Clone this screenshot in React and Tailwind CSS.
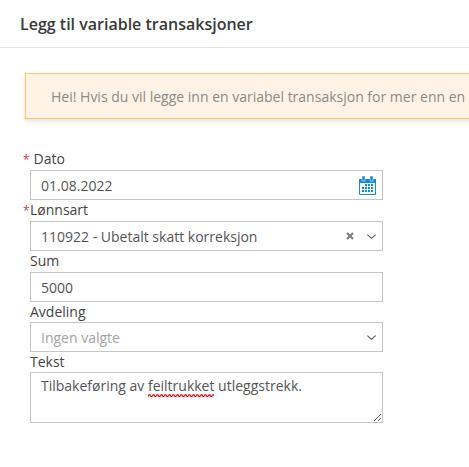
import React from 'react';

const CalendarIcon = () => (
  <svg width="17" height="19" viewBox="0 0 17 19" className="block">
    <path d="M0.5 3.5h16v15h-16z" fill="#fff" stroke="#0f8ad8" />
    <rect x="0" y="3" width="17" height="4" fill="#0f8ad8" />
    <rect x="3" y="0" width="3" height="5" fill="#0f8ad8" stroke="#fff" strokeWidth="0.5" />
    <rect x="11" y="0" width="3" height="5" fill="#0f8ad8" stroke="#fff" strokeWidth="0.5" />
    <g fill="#0f8ad8">
      <rect x="6" y="8" width="2" height="2" />
      <rect x="9" y="8" width="2" height="2" />
      <rect x="12" y="8" width="2" height="2" />
      <rect x="3" y="11" width="2" height="2" />
      <rect x="6" y="11" width="2" height="2" />
      <rect x="9" y="11" width="2" height="2" />
      <rect x="12" y="11" width="2" height="2" />
      <rect x="3" y="14" width="2" height="2" />
      <rect x="6" y="14" width="2" height="2" />
      <rect x="9" y="14" width="2" height="2" />
      <rect x="12" y="14" width="2" height="2" />
    </g>
  </svg>
);

const Chevron = () => (
  <svg width="9" height="5" viewBox="0 0 9 5" className="block">
    <path d="M0.4 0.6 4.5 4.3 8.6 0.6" fill="none" stroke="#555" strokeWidth="1.1" />
  </svg>
);

const Clear = () => (
  <svg width="8" height="8" viewBox="0 0 8 8" className="block">
    <path d="M1 1 7 7M7 1 1 7" fill="none" stroke="#808080" strokeWidth="2.2" />
  </svg>
);

const Field = ({ children }) => (
  <div className="h-[30px] w-[353px] border border-[#c6c6c6] bg-white flex items-center pl-[10px] pr-[6px] text-[14px] text-[#555]">
    {children}
  </div>
);

const Label = ({ className, children }) => (
  <div className={`text-[14px] leading-[20px] text-[#444] ${className}`}>{children}</div>
);

export default function App() {
  return (
    <div className="w-[469px] h-[467px] overflow-hidden bg-white font-['Open_Sans',sans-serif]">
      <div className="h-[48px] border-b border-[#e2e2e2] pl-[20px] flex items-center">
        <h1 className="text-[16px] font-semibold text-[#3a3a3a]">Legg til variable transaksjoner</h1>
      </div>

      <div className="ml-[25px] mt-[25px] w-[600px] h-[46px] border border-[#fbc56e] bg-[#fff3e6] shadow-[0_2px_5px_rgba(0,0,0,0.12)] pl-[25px] flex items-center text-[14px] text-[#8a8a8a] whitespace-nowrap">
        Hei! Hvis du vil legge inn en variabel transaksjon for mer enn en
      </div>

      <div className="mt-[30px] ml-[30px] relative">
        <span className="absolute left-[-7px] top-[1px] text-[12px] leading-[20px] text-[#d9363e]">*</span>
        <Label className="h-[21px]"><span className="ml-[3.5px]">Dato</span></Label>
        <Field>
          <span className="flex-1">01.08.2022</span>
          <CalendarIcon />
        </Field>

        <div className="relative">
          <span className="absolute left-[-7px] top-[1px] text-[12px] leading-[20px] text-[#d9363e]">*</span>
          <Label className="h-[21px]">Lønnsart</Label>
        </div>
        <Field>
          <span className="flex-1">110922 - Ubetalt skatt korreksjon</span>
          <span className="mr-[13px]"><Clear /></span>
          <Chevron />
        </Field>

        <Label className="h-[21px]">Sum</Label>
        <Field>5000</Field>

        <Label className="h-[20px]">Avdeling</Label>
        <Field>
          <span className="flex-1 text-[#a3a3a3]">Ingen valgte</span>
          <Chevron />
        </Field>

        <Label className="h-[20px]">Tekst</Label>
        <div className="h-[51px] w-[353px] border border-[#c6c6c6] bg-white px-[10px] pt-[3px] text-[14px] leading-[20px] text-[#555] resize overflow-auto">
          Tilbakeføring av{' '}
          <span className="relative">
            feiltrukket
            <svg className="absolute left-0 top-[18px] w-full h-[3px]" preserveAspectRatio="none">
              <defs>
                <pattern id="squiggle" width="4" height="3" patternUnits="userSpaceOnUse">
                  <path d="M0 2.4 1 0.8 2 0.8 3 2.4 4 2.4" fill="none" stroke="#f01010" strokeWidth="1.3" />
                </pattern>
              </defs>
              <rect width="100%" height="3" fill="url(#squiggle)" />
            </svg>
          </span>{' '}
          utleggstrekk.
        </div>
      </div>
    </div>
  );
}
